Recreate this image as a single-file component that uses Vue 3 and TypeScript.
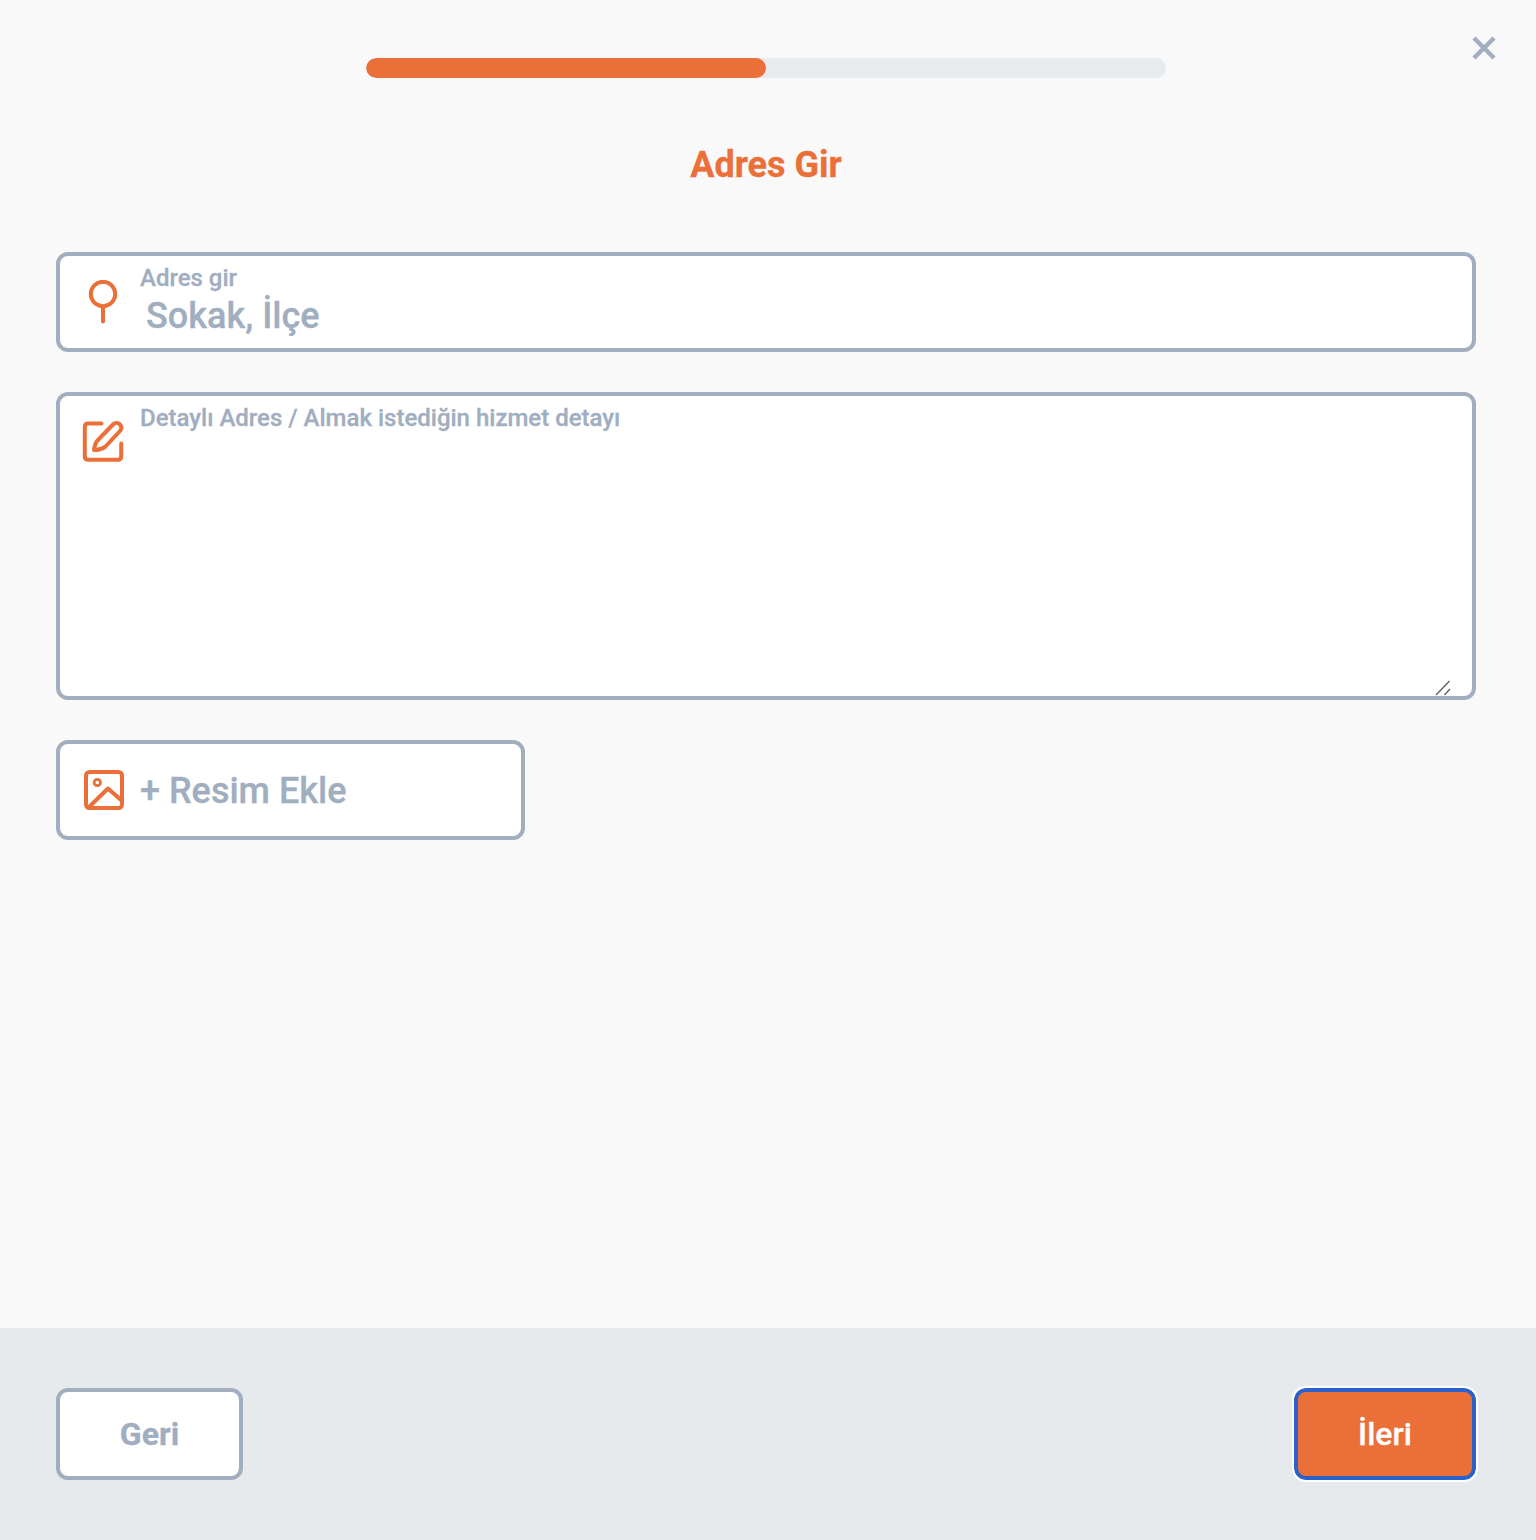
<template>
  <div class="page">
    <main class="main">
      <button class="close" type="button" aria-label="Kapat">
        <svg width="26" height="26" viewBox="0 0 26 26" fill="none">
          <path d="M3 3 L23 23 M23 3 L3 23" stroke="#a0aec0" stroke-width="4.4" />
        </svg>
      </button>

      <div class="progress">
        <div class="progress-fill" :style="{ width: progress + '%' }"></div>
      </div>

      <h1 class="title">Adres Gir</h1>

      <!-- adres -->
      <label class="field field-address">
        <svg class="icon pin" width="30" height="44" viewBox="0 0 30 44" fill="none">
          <circle cx="15" cy="14" r="12.2" stroke="#eb6f39" stroke-width="4" />
          <path d="M15 27 V41.5" stroke="#eb6f39" stroke-width="4" stroke-linecap="round" />
        </svg>
        <span class="field-body">
          <span class="field-label">Adres gir</span>
          <input class="address-input" type="text" placeholder="Sokak, İlçe" />
        </span>
      </label>

      <!-- detay -->
      <label class="field field-detail">
        <svg class="icon" width="42" height="42" viewBox="0 0 42 42" fill="none">
          <path d="M19.500 3.500 H6 Q2.800 3.500 2.800 7 V36 Q2.800 39.800 6 39.800 H36 Q39.200 39.800 39.200 36 V23.500"
            stroke="#eb6f39" stroke-width="4" stroke-linecap="round" stroke-linejoin="round" />
          <path d="M12 30 C12.500 25 14 22 16 20 L31 4.500 C33 2.500 36 2.500 38 4.500 C40 6.500 40 9 38 11 L23 27 C20 29 16 30 12 30 Z"
            stroke="#eb6f39" stroke-width="4" stroke-linejoin="round" />
        </svg>
        <textarea class="detail-input" placeholder="Detaylı Adres / Almak istediğin hizmet detayı"></textarea>
        <svg class="grip" width="16" height="16" viewBox="0 0 16 16" fill="none">
          <path d="M1 15 L14.500 1 M9.500 15 L15 9" stroke="#666" stroke-width="1.500" />
        </svg>
      </label>

      <!-- resim -->
      <button class="image-add" type="button">
        <svg class="icon" width="42" height="42" viewBox="0 0 42 42" fill="none">
          <rect x="3" y="3" width="36" height="36" rx="3.500" stroke="#eb6f39" stroke-width="4" />
          <circle cx="14.300" cy="13.500" r="3.200" stroke="#eb6f39" stroke-width="2.800" />
          <path d="M5 39 L25 19.500 L38 31" stroke="#eb6f39" stroke-width="4" stroke-linejoin="round" />
        </svg>
        <span class="image-label">+ Resim Ekle</span>
      </button>
    </main>

    <footer class="footer">
      <button class="btn btn-back" type="button">Geri</button>
      <button class="btn btn-next" type="button">İleri</button>
    </footer>
  </div>
</template>

<script setup lang="ts">
import { ref } from 'vue'

const progress = ref<number>(50)
</script>

<style>
body {
  background: #f9f9f9;
}
</style>

<style scoped>
.page {
  min-height: 1540px;
  display: flex;
  flex-direction: column;
  background: #f9f9f9;
  font-family: Roboto, "Noto Sans", sans-serif;
  -webkit-text-stroke: 0.3px;
}

.main {
  position: relative;
  flex: 1;
  display: flex;
  flex-direction: column;
  align-items: center;
  padding: 58px 60px 0 56px;
}

.close {
  position: absolute;
  top: 35px;
  right: 39px;
  width: 26px;
  height: 26px;
  padding: 0;
  border: 0;
  background: none;
  display: flex;
}

/* ===== progress ===== */
.progress {
  width: 800px;
  height: 20px;
  border-radius: 10px;
  background: #e8ebee;
  overflow: hidden;
}
.progress-fill {
  height: 100%;
  border-radius: 10px;
  background: #eb6f39;
}

.title {
  margin: 65px 0 65px;
  font-size: 36px;
  line-height: 44px;
  font-weight: 700;
  color: #eb6f39;
}

/* ===== fields ===== */
.field,
.image-add {
  box-sizing: border-box;
  border: 4px solid #a0aebf;
  border-radius: 12px;
  background: #fff;
  display: flex;
}
.field {
  position: relative;
  width: 100%;
}
.field-address {
  height: 100px;
  align-items: center;
  padding-left: 26px;
  margin-bottom: 40px;
}
.pin {
  margin: 0 0 0 2px;
  flex-shrink: 0;
}
.field-body {
  display: flex;
  flex-direction: column;
  flex: 1;
  margin-left: 22px;
  margin-top: -3px;
}
.field-label {
  font-size: 24px;
  line-height: 28px;
  font-weight: 500;
  color: #a0aebf;
  margin-bottom: 2px;
}
.address-input {
  border: 0;
  outline: 0;
  padding: 0 6px;
  background: none;
  font-family: inherit;
  font-size: 36px;
  line-height: 44px;
  height: 44px;
  font-weight: 500;
  color: #4a5568;
}
.address-input::placeholder {
  color: #a0aebf;
  opacity: 1;
}

.field-detail {
  height: 308px;
  padding-left: 22px;
  align-items: flex-start;
  margin-bottom: 40px;
}
.field-detail .icon {
  margin-top: 24px;
  flex-shrink: 0;
}
.detail-input {
  flex: 1;
  height: 300px;
  box-sizing: border-box;
  margin: 0 20px 0 16px;
  padding: 8px 0 0;
  border: 0;
  outline: 0;
  background: none;
  font-family: inherit;
  font-size: 24px;
  line-height: 28px;
  font-weight: 500;
  color: #4a5568;
  resize: none;
}
.detail-input::placeholder {
  color: #a0aebf;
  opacity: 1;
}
.grip {
  position: absolute;
  right: 21px;
  bottom: 0;
}

.image-add {
  width: 469px;
  height: 100px;
  align-self: flex-start;
  align-items: center;
  padding: 0 0 0 23px;
  gap: 15px;
  font-family: inherit;
  font-size: 36px;
  font-weight: 500;
  color: #a0aebf;
}
.image-label {
  padding-top: 2px;
}

/* ===== footer ===== */
.footer {
  height: 212px;
  box-sizing: border-box;
  padding: 60px 60px 60px 56px;
  background: #e7eaed;
  display: flex;
  align-items: flex-start;
  justify-content: space-between;
}
.btn {
  box-sizing: border-box;
  height: 92px;
  border-radius: 12px;
  font-family: inherit;
  font-size: 32px;
  font-weight: 700;
}
.btn-back {
  width: 187px;
  border: 4px solid #a0aebf;
  background: #fff;
  color: #a0aebf;
}
.btn-next {
  width: 182px;
  border: 4px solid #2b62c9;
  background: #eb6f39;
  color: #fff;
  font-weight: 500;
  outline: 2px solid #fff;
  outline-offset: 0;
}
</style>
